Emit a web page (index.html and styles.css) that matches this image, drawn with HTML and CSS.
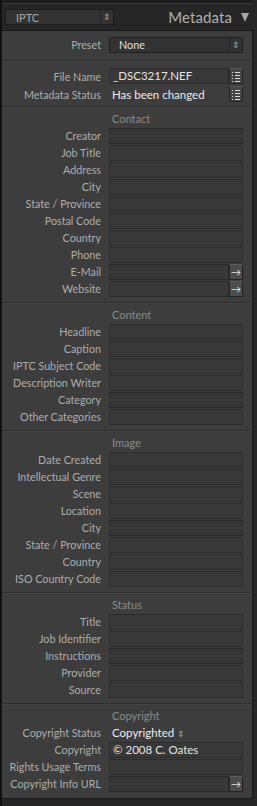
FILE: index.html
```html
<!DOCTYPE html>
<html lang="en">
<head>
    <meta charset="UTF-8">
    <title>Metadata - IPTC</title>
    <link rel="stylesheet" href="styles.css">
</head>
<body>
    <div class="topstrip"></div>
    <div class="header">
        <div class="set-select">
            <span>IPTC</span>
            <span class="spin">&#8661;</span>
        </div>
        <div class="title">Metadata <span class="tri"></span></div>
    </div>

    <div class="panel">
        <div class="group first">
            <div class="row">
                <label>Preset</label>
                <div class="field select"><span>None</span><span class="spin">&#8661;</span></div>
            </div>
        </div>

        <div class="group info">
            <div class="row">
                <label>File Name</label>
                <div class="field short value">_DSC3217.NEF</div>
                <span class="btn list"></span>
            </div>
            <div class="row">
                <label>Metadata Status</label>
                <div class="plain">Has been changed</div>
                <span class="btn list"></span>
            </div>
        </div>

        <div class="group">
            <div class="section">Contact</div>
            <div class="row"><label>Creator</label><div class="field"></div></div>
            <div class="row"><label>Job Title</label><div class="field"></div></div>
            <div class="row"><label>Address</label><div class="field"></div></div>
            <div class="row"><label>City</label><div class="field"></div></div>
            <div class="row"><label>State / Province</label><div class="field"></div></div>
            <div class="row"><label>Postal Code</label><div class="field"></div></div>
            <div class="row"><label>Country</label><div class="field"></div></div>
            <div class="row"><label>Phone</label><div class="field"></div></div>
            <div class="row"><label>E-Mail</label><div class="field short"></div><span class="btn go">&#8594;</span></div>
            <div class="row"><label>Website</label><div class="field short"></div><span class="btn go">&#8594;</span></div>
        </div>

        <div class="group">
            <div class="section">Content</div>
            <div class="row"><label>Headline</label><div class="field"></div></div>
            <div class="row"><label>Caption</label><div class="field"></div></div>
            <div class="row"><label>IPTC Subject Code</label><div class="field"></div></div>
            <div class="row"><label>Description Writer</label><div class="field"></div></div>
            <div class="row"><label>Category</label><div class="field"></div></div>
            <div class="row"><label>Other Categories</label><div class="field"></div></div>
        </div>

        <div class="group">
            <div class="section">Image</div>
            <div class="row"><label>Date Created</label><div class="field"></div></div>
            <div class="row"><label>Intellectual Genre</label><div class="field"></div></div>
            <div class="row"><label>Scene</label><div class="field"></div></div>
            <div class="row"><label>Location</label><div class="field"></div></div>
            <div class="row"><label>City</label><div class="field"></div></div>
            <div class="row"><label>State / Province</label><div class="field"></div></div>
            <div class="row"><label>Country</label><div class="field"></div></div>
            <div class="row"><label>ISO Country Code</label><div class="field"></div></div>
        </div>

        <div class="group">
            <div class="section">Status</div>
            <div class="row"><label>Title</label><div class="field"></div></div>
            <div class="row"><label>Job Identifier</label><div class="field"></div></div>
            <div class="row"><label>Instructions</label><div class="field"></div></div>
            <div class="row"><label>Provider</label><div class="field"></div></div>
            <div class="row"><label>Source</label><div class="field"></div></div>
        </div>

        <div class="group last">
            <div class="section">Copyright</div>
            <div class="row">
                <label>Copyright Status</label>
                <div class="plain">Copyrighted <span class="spin">&#8661;</span></div>
            </div>
            <div class="row"><label>Copyright</label><div class="field value">&copy; 2008 C. Oates</div></div>
            <div class="row"><label>Rights Usage Terms</label><div class="field"></div></div>
            <div class="row"><label>Copyright Info URL</label><div class="field short"></div><span class="btn go">&#8594;</span></div>
        </div>
    </div>
</body>
</html>
```

FILE: styles.css
```css
* {
    margin: 0;
    padding: 0;
    box-sizing: border-box;
}

body {
    width: 257px;
    height: 806px;
    background: #262626;
    font-family: 'Lato', 'Liberation Sans', sans-serif;
    font-size: 10.75px;
    color: #b0b0b0;
    overflow: hidden;
    border-left: 2px solid #111;
}

.topstrip {
    height: 4px;
    margin-right: 4px;
    background: #1c1c1c;
    border-bottom: 1px solid #3a3a3a;
}

.header {
    height: 26px;
    display: flex;
    align-items: center;
    justify-content: space-between;
    padding: 0 8px 0 3px;
}

.set-select {
    width: 109px;
    height: 16px;
    display: flex;
    align-items: center;
    justify-content: space-between;
    background: #333;
    border: 1px solid #1c1c1c;
    color: #a8a8a8;
    padding-left: 10px;
    font-size: 11px;
}

.set-select .spin {
    width: 13px;
    height: 100%;
    border-left: 1px solid #222;
    text-align: center;
    line-height: 14px;
}

.spin {
    font-size: 9px;
    color: #a0a0a0;
}

.title {
    display: flex;
    align-items: center;
    font-size: 15px;
    color: #b0b0b0;
    letter-spacing: 0.1px;
}

.title .tri {
    width: 0;
    height: 0;
    margin-left: 9px;
    border-left: 4.5px solid transparent;
    border-right: 4.5px solid transparent;
    border-top: 9px solid #a8a8a8;
}

.panel {
    width: 251px;
    background: #3d3d3d;
    border: 1px solid #1a1a1a;
    border-left: none;
}

.group {
    border-bottom: 1px solid #2e2e2e;
    box-shadow: 0 1px 0 #444;
    padding: 4px 0 5px;
}

.group.first {
    padding: 5px 0 7px;
}

.group.info {
    padding: 6px 0 3px;
}

.group.info .row {
    height: 18px;
}

.group.last {
    border-bottom: none;
    box-shadow: none;
    padding-bottom: 6px;
}

.section {
    margin-left: 110px;
    color: #8a8a8a;
    font-size: 11px;
    height: 16px;
    line-height: 16px;
}

.row {
    display: flex;
    align-items: center;
    height: 17px;
}

.row label {
    width: 99px;
    text-align: right;
    margin-right: 8px;
    white-space: nowrap;
    color: #adadad;
}

.field {
    width: 134px;
    height: 16px;
    background: #383838;
    border: 1px solid #2c2c2c;
    color: #e4e4e4;
    line-height: 14px;
    padding-left: 3px;
}

.field.short {
    width: 120px;
}

.field.value {
    font-size: 11.5px;
}

.field.select {
    display: flex;
    justify-content: space-between;
    padding-left: 9px;
    background: #333;
    border-color: #1f1f1f;
    color: #e0e0e0;
}

.field.select .spin {
    width: 13px;
    border-left: 1px solid #262626;
    text-align: center;
}

.plain {
    color: #ececec;
    font-size: 11.5px;
    width: 120px;
    padding-left: 3px;
}

.btn {
    width: 14px;
    height: 16px;
    background: #4c4c4c;
    border: 1px solid #242424;
    border-top-color: #5a5a5a;
    color: #e0e0e0;
    font-size: 10px;
    line-height: 14px;
    text-align: center;
}

.btn.list {
    background:
        repeating-linear-gradient(#d8d8d8 0 1px, transparent 1px 3px) 5px 3px / 5px 10px no-repeat,
        repeating-linear-gradient(#d8d8d8 0 1px, transparent 1px 3px) 2px 3px / 1px 10px no-repeat,
        #444;
}
```
